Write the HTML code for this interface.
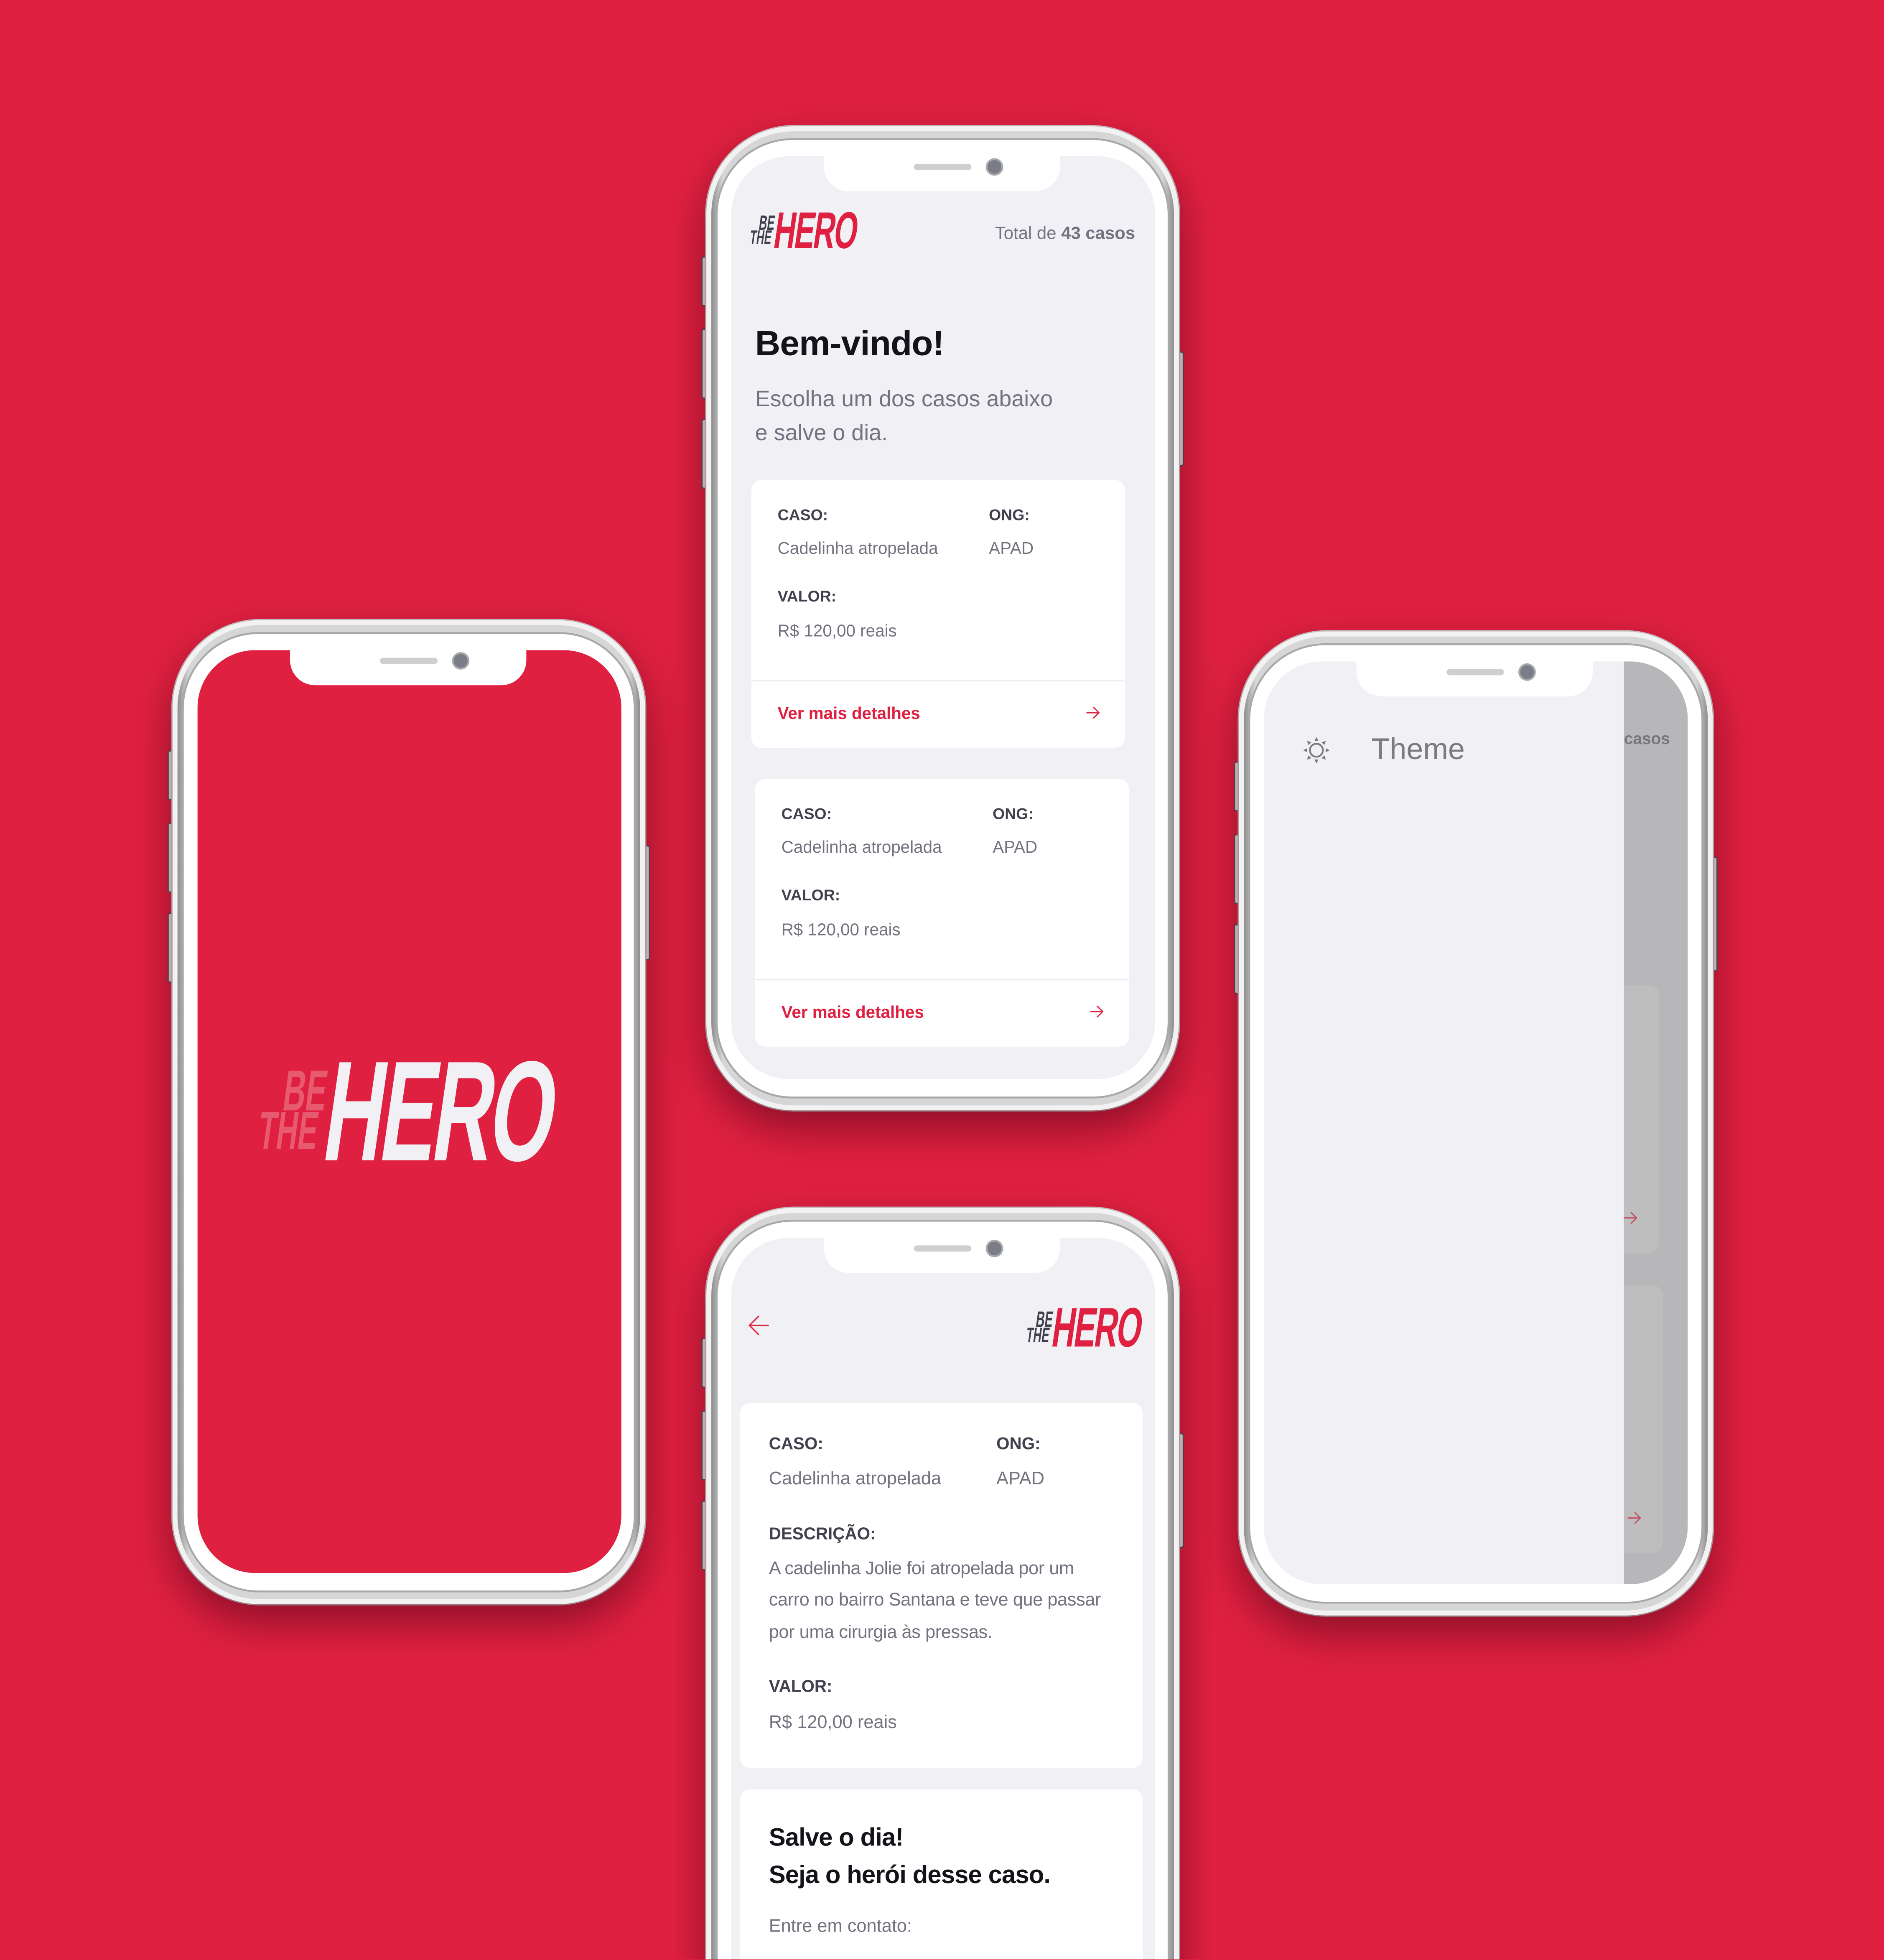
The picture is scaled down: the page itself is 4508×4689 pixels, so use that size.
<!DOCTYPE html>
<html><head><meta charset="utf-8">
<style>
html,body{margin:0;padding:0}
body{width:4508px;height:4689px;overflow:hidden;background:#E02041;position:relative}
#s{position:absolute;left:0;top:0;width:1507px;height:1567px;overflow:hidden;transform:scale(2.99137);transform-origin:0 0;font-family:"Liberation Sans",sans-serif}
.frame{position:absolute;width:378px;height:787px;border-radius:70px;background:#f2f2f2;box-shadow:0 14px 34px rgba(70,0,18,.55),0 0 0 1px #d0d0d0}
.band{position:absolute;left:4px;top:4px;right:4px;bottom:4px;border-radius:66px;background:linear-gradient(90deg,#8d8d8d,#d6d6d6 2.5%,#d6d6d6 97.5%,#8d8d8d);}
.bez{position:absolute;left:9px;top:11px;right:9px;bottom:11px;border-radius:60px;background:#fff;box-shadow:0 0 0 1.5px #a8a8a8}
.scr{position:absolute;left:20px;top:24px;width:339px;height:738px;border-radius:46px;overflow:hidden;background:#F0F0F5}
.notch{position:absolute;left:94px;top:20px;width:189px;height:32px;background:#fff;border-radius:0 0 20px 20px}
.spk{position:absolute;left:72px;top:10px;width:46px;height:5px;border-radius:3px;background:#cfcfcf}
.cam{position:absolute;left:131px;top:7px;width:11px;height:11px;border-radius:50%;background:#7a7c88;box-shadow:0 0 0 1.5px #a9a9a9}
.btn{position:absolute;width:4px;background:#e8e8e8;border:1px solid #555;border-radius:2px}
.t{position:absolute;white-space:nowrap;line-height:1}
.lb{font-weight:bold;color:#41414d}
.vl{color:#737380}
.card{position:absolute;background:#fff;border-radius:8px}
.logo{position:absolute;width:240px;height:106px;transform-origin:0 0}
.logo span{position:absolute;font-weight:bold;line-height:1;white-space:nowrap;transform-origin:0 100%;font-family:"Liberation Sans",sans-serif}
.logo .be{left:17px;top:13px;font-size:46px;transform:scaleX(.54) skewX(-14deg)}
.logo .the{left:-3px;top:48px;font-size:43px;transform:scaleX(.55) skewX(-14deg)}
.logo .hero{left:46px;top:-3px;font-size:114px;letter-spacing:-4px;transform:scaleX(.58) skewX(-14deg)}
</style></head><body>
<div id="s">

<!-- Phone 1 splash -->
<div class="btn" style="left:134px;top:600px;height:38px"></div>
<div class="btn" style="left:134px;top:658px;height:54px"></div>
<div class="btn" style="left:134px;top:730px;height:54px"></div>
<div class="btn" style="left:514px;top:676px;height:90px"></div>
<div class="frame" style="left:138px;top:496px"><div class="band"></div><div class="bez"></div>
 <div class="scr" style="background:#E02041"></div>
 <div class="notch"><div class="spk"></div><div class="cam"></div></div>
</div>
<div class="logo" style="left:207px;top:836px">
 <span class="be" style="color:#E75A70">BE</span>
 <span class="the" style="color:#E75A70">THE</span>
 <span class="hero" style="color:#F0F0F5">HERO</span>
</div>

<!-- Phone 2 list -->
<div class="btn" style="left:561px;top:205px;height:38px"></div>
<div class="btn" style="left:561px;top:263px;height:54px"></div>
<div class="btn" style="left:561px;top:335px;height:54px"></div>
<div class="btn" style="left:941px;top:281px;height:90px"></div>
<div class="frame" style="left:565px;top:101px"><div class="band"></div><div class="bez"></div>
 <div class="scr"></div>
 <div class="notch"><div class="spk"></div><div class="cam"></div></div>
</div>
<div class="logo" style="left:600px;top:165px;transform:scale(.3625)">
 <span class="be" style="color:#41414d">BE</span>
 <span class="the" style="color:#41414d">THE</span>
 <span class="hero" style="color:#E02041">HERO</span>
</div>
<div class="t vl" style="right:599px;top:179px;font-size:14px">Total de <b>43 casos</b></div>
<div class="t" style="left:604px;top:261px;font-size:28px;font-weight:bold;color:#13131a;letter-spacing:-.3px">Bem-vindo!</div>
<div class="t vl" style="left:604px;top:310px;font-size:18px">Escolha um dos casos abaixo</div>
<div class="t vl" style="left:604px;top:337px;font-size:18px">e salve o dia.</div>

<div class="card" style="left:601px;top:384px;width:299px;height:214px">
 <div style="position:absolute;left:0;right:0;top:160px;height:1px;background:#ececf0"></div>
</div>
<div class="t lb" style="left:622px;top:406px;font-size:12.5px">CASO:</div>
<div class="t lb" style="left:791px;top:406px;font-size:12.5px">ONG:</div>
<div class="t vl" style="left:622px;top:432px;font-size:13.5px">Cadelinha atropelada</div>
<div class="t vl" style="left:791px;top:432px;font-size:13.5px">APAD</div>
<div class="t lb" style="left:622px;top:471px;font-size:12.5px">VALOR:</div>
<div class="t vl" style="left:622px;top:498px;font-size:13.5px">R$ 120,00 reais</div>
<div class="t" style="left:622px;top:564px;font-size:13.5px;font-weight:bold;color:#E02041">Ver mais detalhes</div>
<svg style="position:absolute;left:868px;top:564px" width="12" height="12" viewBox="0 0 12 12"><path d="M1 6H11M6.5 1.5L11 6L6.5 10.5" fill="none" stroke="#E02041" stroke-width="1"/></svg>

<div class="card" style="left:604px;top:623px;width:299px;height:214px">
 <div style="position:absolute;left:0;right:0;top:160px;height:1px;background:#ececf0"></div>
</div>
<div class="t lb" style="left:625px;top:645px;font-size:12.5px">CASO:</div>
<div class="t lb" style="left:794px;top:645px;font-size:12.5px">ONG:</div>
<div class="t vl" style="left:625px;top:671px;font-size:13.5px">Cadelinha atropelada</div>
<div class="t vl" style="left:794px;top:671px;font-size:13.5px">APAD</div>
<div class="t lb" style="left:625px;top:710px;font-size:12.5px">VALOR:</div>
<div class="t vl" style="left:625px;top:737px;font-size:13.5px">R$ 120,00 reais</div>
<div class="t" style="left:625px;top:803px;font-size:13.5px;font-weight:bold;color:#E02041">Ver mais detalhes</div>
<svg style="position:absolute;left:871px;top:803px" width="12" height="12" viewBox="0 0 12 12"><path d="M1 6H11M6.5 1.5L11 6L6.5 10.5" fill="none" stroke="#E02041" stroke-width="1"/></svg>

<!-- Phone 3 theme drawer -->
<div class="btn" style="left:987px;top:609px;height:38px"></div>
<div class="btn" style="left:987px;top:667px;height:54px"></div>
<div class="btn" style="left:987px;top:739px;height:54px"></div>
<div class="btn" style="left:1368px;top:685px;height:90px"></div>
<div class="frame" style="left:991px;top:505px;width:379px"><div class="band"></div><div class="bez"></div>
 <div class="scr">
  <div style="position:absolute;left:288px;top:0;right:0;bottom:0;background:#B7B7B9">
   <div style="position:absolute;left:0;top:259px;width:28px;height:214px;background:#bebebe;border-radius:0 8px 8px 0"></div>
   <div style="position:absolute;left:0;top:499px;width:31px;height:214px;background:#bebebe;border-radius:0 8px 8px 0"></div>
   <svg style="position:absolute;left:-1px;top:439px" width="12" height="12" viewBox="0 0 12 12"><path d="M1 6H11M6.5 1.5L11 6L6.5 10.5" fill="none" stroke="#c45068" stroke-width="1"/></svg>
   <svg style="position:absolute;left:2px;top:679px" width="12" height="12" viewBox="0 0 12 12"><path d="M1 6H11M6.5 1.5L11 6L6.5 10.5" fill="none" stroke="#c45068" stroke-width="1"/></svg>
   <div class="t" style="left:0;top:55px;font-size:13px;font-weight:bold;color:#77777c">casos</div>
  </div>
 </div>
 <div class="notch"><div class="spk"></div><div class="cam"></div></div>
</div>
<svg style="position:absolute;left:1042px;top:589px" width="22" height="22" viewBox="-11 -11 22 22">
 <circle r="5.2" fill="none" stroke="#7a7a7a" stroke-width="1.4"/>
 <g fill="#7a7a7a">
  <path d="M-1.6-7.4L0-10.6L1.6-7.4Z"/>
  <path d="M-1.6-7.4L0-10.6L1.6-7.4Z" transform="rotate(45)"/>
  <path d="M-1.6-7.4L0-10.6L1.6-7.4Z" transform="rotate(90)"/>
  <path d="M-1.6-7.4L0-10.6L1.6-7.4Z" transform="rotate(135)"/>
  <path d="M-1.6-7.4L0-10.6L1.6-7.4Z" transform="rotate(180)"/>
  <path d="M-1.6-7.4L0-10.6L1.6-7.4Z" transform="rotate(225)"/>
  <path d="M-1.6-7.4L0-10.6L1.6-7.4Z" transform="rotate(270)"/>
  <path d="M-1.6-7.4L0-10.6L1.6-7.4Z" transform="rotate(315)"/>
 </g>
</svg>
<div class="t" style="left:1097px;top:588px;font-size:24px;color:#7b7b7b">Theme</div>

<!-- Phone 4 detail (clipped wrapper) -->
<div style="position:absolute;left:540px;top:940px;width:430px;height:627px;overflow:hidden">
<div class="btn" style="left:21px;top:130px;height:38px"></div>
<div class="btn" style="left:21px;top:188px;height:54px"></div>
<div class="btn" style="left:21px;top:260px;height:54px"></div>
<div class="btn" style="left:401px;top:206px;height:90px"></div>
<div class="frame" style="left:25px;top:26px"><div class="band"></div><div class="bez"></div>
 <div class="scr"></div>
 <div class="notch"><div class="spk"></div><div class="cam"></div></div>
</div>
</div>
<svg style="position:absolute;left:598px;top:1051px" width="18" height="18" viewBox="0 0 18 18"><path d="M17 9H2M9 1.5L1.5 9L9 16.5" fill="none" stroke="#E02041" stroke-width="1.1"/></svg>
<div class="logo" style="left:821px;top:1041px;transform:scale(.39)">
 <span class="be" style="color:#41414d">BE</span>
 <span class="the" style="color:#41414d">THE</span>
 <span class="hero" style="color:#E02041">HERO</span>
</div>
<div class="card" style="left:592px;top:1122px;width:322px;height:292px"></div>
<div class="t lb" style="left:615px;top:1148px;font-size:13.5px">CASO:</div>
<div class="t lb" style="left:797px;top:1148px;font-size:13.5px">ONG:</div>
<div class="t vl" style="left:615px;top:1176px;font-size:14.5px">Cadelinha atropelada</div>
<div class="t vl" style="left:797px;top:1176px;font-size:14.5px">APAD</div>
<div class="t lb" style="left:615px;top:1220px;font-size:13.5px">DESCRIÇÃO:</div>
<div class="t vl" style="left:615px;top:1248px;font-size:14.5px;letter-spacing:-.15px">A cadelinha Jolie foi atropelada por um</div>
<div class="t vl" style="left:615px;top:1273px;font-size:14.5px;letter-spacing:-.15px">carro no bairro Santana e teve que passar</div>
<div class="t vl" style="left:615px;top:1299px;font-size:14.5px;letter-spacing:-.15px">por uma cirurgia às pressas.</div>
<div class="t lb" style="left:615px;top:1342px;font-size:13.5px">VALOR:</div>
<div class="t vl" style="left:615px;top:1371px;font-size:14.5px">R$ 120,00 reais</div>
<div class="card" style="left:592px;top:1431px;width:322px;height:136px;border-radius:8px 8px 0 0"></div>
<div class="t" style="left:615px;top:1460px;font-size:20px;font-weight:bold;color:#13131a;letter-spacing:-.3px">Salve o dia!</div>
<div class="t" style="left:615px;top:1490px;font-size:20px;font-weight:bold;color:#13131a;letter-spacing:-.3px">Seja o herói desse caso.</div>
<div class="t vl" style="left:615px;top:1534px;font-size:14.5px">Entre em contato:</div>

</div>
</body></html>
